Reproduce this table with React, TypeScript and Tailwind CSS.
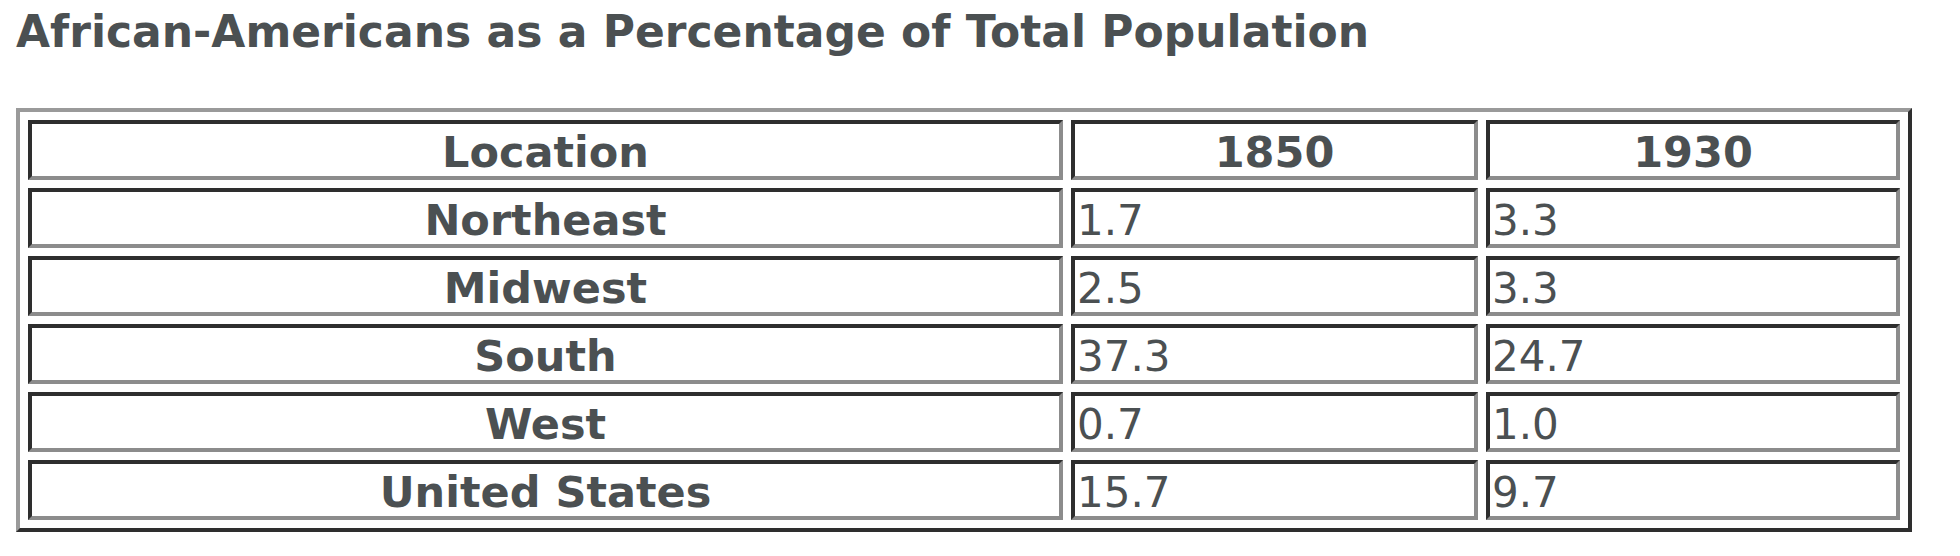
const rows: [string, string, string][] = [
  ['Northeast', '1.7', '3.3'],
  ['Midwest', '2.5', '3.3'],
  ['South', '37.3', '24.7'],
  ['West', '0.7', '1.0'],
  ['United States', '15.7', '9.7'],
]

const cell =
  'h-[60px] pt-[5px] border-4 border-t-[#2e2e2e] border-l-[#2e2e2e] border-b-[#8c8c8c] border-r-[#8c8c8c] flex items-center'

export default function App() {
  return (
    <div className="w-[1960px] h-[556px] bg-white text-[#4b5052] font-['DejaVu_Sans',Verdana,sans-serif]">
      <h1 className="pt-[10px] pl-[16px] text-[44px] leading-[44px] font-bold">
        African-Americans as a Percentage of Total Population
      </h1>

      <div className="mt-[54px] ml-[16px] w-[1896px] border-4 border-t-[#9a9a9a] border-l-[#9a9a9a] border-b-[#2e2e2e] border-r-[#2e2e2e] p-2">
        <div className="grid grid-cols-[1035px_407px_414px] gap-2">
          <div className={`${cell} justify-center text-[43px] font-bold`}>Location</div>
          <div className={`${cell} justify-center text-[43px] font-bold`}>1850</div>
          <div className={`${cell} justify-center text-[43px] font-bold`}>1930</div>

          {rows.map(([loc, a, b]) => (
            <div key={loc} className="contents">
              <div className={`${cell} justify-center text-[43px] font-bold`}>{loc}</div>
              <div className={`${cell} pl-[2px] text-[42px]`}>{a}</div>
              <div className={`${cell} pl-[2px] text-[42px]`}>{b}</div>
            </div>
          ))}
        </div>
      </div>
    </div>
  )
}
